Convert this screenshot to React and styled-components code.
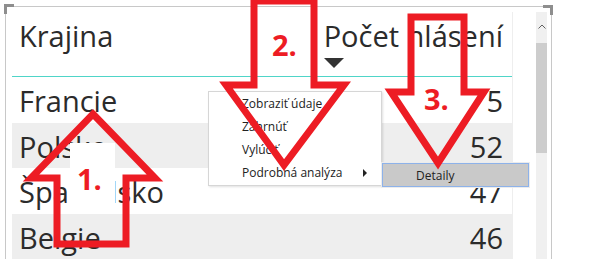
import React from "react";
import styled, { createGlobalStyle } from "styled-components";

const RED = "#ed1c24";
const FONT = `"Open Sans", "Noto Sans", sans-serif`;

const ROWS = [
  { country: "Francie", count: 5 },
  { country: "Polsko", count: 52 },
  { country: "Španielsko", count: 47 },
  { country: "Belgie", count: 46 }
];

const MENU_ITEMS = ["Zobraziť údaje", "Zahrnúť", "Vylúčiť", "Podrobná analýza"];

// red callout arrows, stroke centre lines
const ARROWS = [
  "93,114 155,178 126,178 126,244 57,244 57,178 31,178",
  "254,1 314,1 314,85 344,85 284,165 226,85 254,85",
  "411,17 464,17 464,92 484,92 438,163 391,92 411,92"
];

const GlobalStyle = createGlobalStyle`
  html, body {
    margin: 0;
    padding: 0;
    background: #fff;
  }
  body {
    width: 596px;
    height: 259px;
    overflow: hidden;
    font-family: ${FONT};
  }
`;

const Page = styled.div`
  position: relative;
  width: 596px;
  height: 259px;
  overflow: hidden;
  box-sizing: border-box;
  padding: 6px 0 0 5px;
`;

const Visual = styled.div`
  display: flex;
  width: 547px;
  height: 270px;
  box-sizing: border-box;
  border: 1px solid #c8c8c8;
  border-bottom: none;
  padding: 5px 4px 0 6px;
`;

const Corner = styled.div`
  position: absolute;
  top: ${p => (p.$right ? 5 : 4)}px;
  left: ${p => (p.$right ? 543 : 4)}px;
  width: 10px;
  height: 10px;
  box-sizing: border-box;
  border-top: 3px solid #8e8e8e;
  ${p => (p.$right ? "border-right" : "border-left")}: 3px solid #8e8e8e;
`;

const Table = styled.div`
  display: flex;
  flex-direction: column;
  width: 501px;
  flex: none;
  border-right: 1px solid #eeeeee;
  box-sizing: border-box;
`;

const Header = styled.div`
  display: flex;
  justify-content: space-between;
  align-items: flex-start;
  height: 65px;
  box-sizing: border-box;
  padding: 4px 9px 0 7px;
  border-bottom: 1px solid #4fd5c8;
  color: #2b2b2b;
  font-size: 29px;
  line-height: 40px;
`;

const SortHead = styled.div`
  display: flex;
  flex-direction: column;
  align-items: flex-start;
`;

const SortMark = styled.div`
  width: 0;
  height: 0;
  margin-top: 2px;
  border-left: 10px solid transparent;
  border-right: 10px solid transparent;
  border-top: 10px solid #333;
`;

const Row = styled.div`
  display: flex;
  justify-content: space-between;
  align-items: flex-start;
  height: 45.5px;
  box-sizing: border-box;
  padding: 4px 9px 0 7px;
  background: ${p => (p.$shaded ? "#eeeeee" : "#ffffff")};
  color: #2b2b2b;
  font-size: 29px;
  line-height: 40px;
`;

const Scrollbar = styled.div`
  display: flex;
  flex-direction: column;
  width: 11px;
  margin-left: 23px;
  background: #f0f0f0;
`;

const ScrollUp = styled.div`
  display: flex;
  justify-content: center;
  padding-top: 12px;
  height: 31px;
  box-sizing: border-box;
`;

const Thumb = styled.div`
  height: 110px;
  background: #cdcdcd;
`;

const Menu = styled.div`
  position: absolute;
  left: 208px;
  top: 91px;
  width: 174px;
  box-sizing: border-box;
  padding-bottom: 1px;
  background: #fff;
  border: 1px solid #d6d6d6;
  box-shadow: 1px 1px 2px rgba(0, 0, 0, 0.12);
`;

const MenuItem = styled.div`
  display: flex;
  align-items: center;
  justify-content: space-between;
  height: 23px;
  padding: 0 14px 0 33px;
  font-size: 12px;
  color: #222;
`;

const SubArrow = styled.div`
  width: 0;
  height: 0;
  border-top: 4px solid transparent;
  border-bottom: 4px solid transparent;
  border-left: 4px solid #222;
`;

const SubMenu = styled.div`
  position: absolute;
  left: 382px;
  top: 163px;
  width: 147px;
  height: 24px;
  box-sizing: border-box;
  display: flex;
  align-items: center;
  padding-left: 33px;
  background: #c9c9c9;
  border: 1px solid #8db2ea;
  box-shadow: 0 0 0 1px #ececec;
  font-size: 12px;
  color: #222;
`;

const Overlay = styled.svg`
  position: absolute;
  left: 0;
  top: 0;
  pointer-events: none;
`;

const Callout = styled.div`
  position: absolute;
  left: ${p => p.$x}px;
  top: ${p => p.$y}px;
  color: ${RED};
  font-size: 29px;
  font-weight: 700;
  line-height: 29px;
`;

const CalloutBox = styled(Callout)`
  width: 45px;
  height: 70px;
  box-sizing: border-box;
  display: flex;
  align-items: center;
  padding-left: 7px;
  background: #fff;
`;

export default function App() {
  return (
    <Page>
      <GlobalStyle />
      <Visual>
        <Table>
          <Header>
            <span>Krajina</span>
            <SortHead>
              <span>Počet hlásení</span>
              <SortMark />
            </SortHead>
          </Header>
          {ROWS.map((r, i) => (
            <Row key={r.country} $shaded={i % 2 === 1}>
              <span>{r.country}</span>
              <span>{r.count}</span>
            </Row>
          ))}
        </Table>
        <Scrollbar>
          <ScrollUp>
            <svg width="8" height="5" viewBox="0 0 8 5">
              <polyline points="0.5,4.5 4,1 7.5,4.5" fill="none" stroke="#606060" strokeWidth="1" />
            </svg>
          </ScrollUp>
          <Thumb />
        </Scrollbar>
      </Visual>
      <Corner />
      <Corner $right />

      <Menu>
        {MENU_ITEMS.map((item, i) => (
          <MenuItem key={item}>
            <span>{item}</span>
            {i === MENU_ITEMS.length - 1 && <SubArrow />}
          </MenuItem>
        ))}
      </Menu>
      <SubMenu>Detaily</SubMenu>

      <CalloutBox $x={70} $y={143}>1.</CalloutBox>
      <Overlay width="596" height="259" viewBox="0 0 596 259">
        {ARROWS.map(pts => (
          <polygon
            key={pts}
            points={pts}
            fill="none"
            stroke={RED}
            strokeWidth="7"
            strokeLinejoin="miter"
            strokeMiterlimit="10"
          />
        ))}
      </Overlay>
      <Callout $x={272} $y={30}>2.</Callout>
      <Callout $x={424} $y={84}>3.</Callout>
    </Page>
  );
}
